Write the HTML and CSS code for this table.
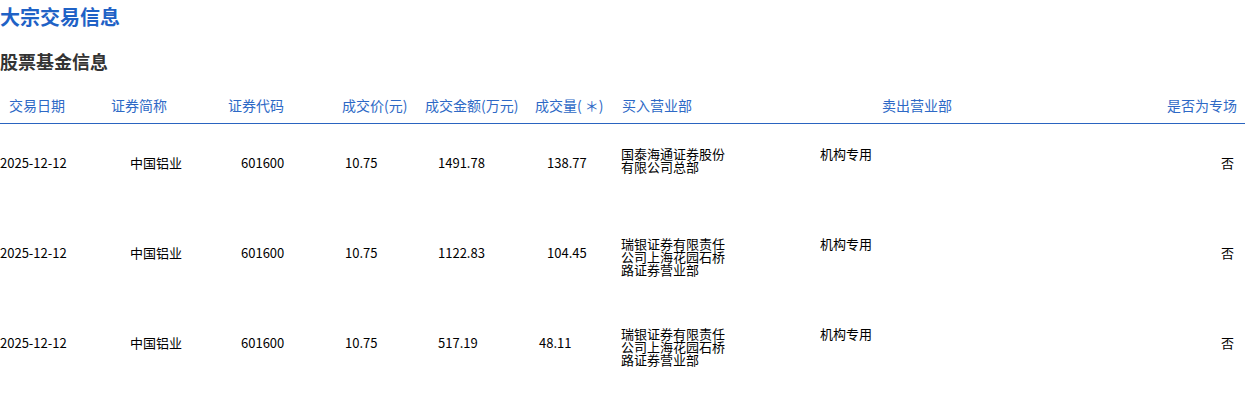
FILE: index.html
```html
<!DOCTYPE html>
<html lang="zh-CN">
<head>
<meta charset="utf-8">
<title>大宗交易信息</title>
<link rel="stylesheet" href="styles.css">
</head>
<body>
<h1 class="title">大宗交易信息</h1>
<h2 class="subtitle">股票基金信息</h2>
<div class="table">
  <div class="row head">
    <div class="c c1">交易日期</div>
    <div class="c c2">证券简称</div>
    <div class="c c3">证券代码</div>
    <div class="c c4">成交价(元)</div>
    <div class="c c5">成交金额(万元)</div>
    <div class="c c6">成交量( ＊)</div>
    <div class="c c7">买入营业部</div>
    <div class="c c8">卖出营业部</div>
    <div class="c c9">是否为专场</div>
  </div>
  <div class="row data">
    <div class="c c1">2025-12-12</div>
    <div class="c c2">中国铝业</div>
    <div class="c c3">601600</div>
    <div class="c c4">10.75</div>
    <div class="c c5">1491.78</div>
    <div class="c c6">138.77</div>
    <div class="c c7 dept">国泰海通证券股份有限公司总部</div>
    <div class="c c8 dept">机构专用</div>
    <div class="c c9">否</div>
  </div>
  <div class="row data">
    <div class="c c1">2025-12-12</div>
    <div class="c c2">中国铝业</div>
    <div class="c c3">601600</div>
    <div class="c c4">10.75</div>
    <div class="c c5">1122.83</div>
    <div class="c c6">104.45</div>
    <div class="c c7 dept">瑞银证券有限责任公司上海花园石桥路证券营业部</div>
    <div class="c c8 dept">机构专用</div>
    <div class="c c9">否</div>
  </div>
  <div class="row data">
    <div class="c c1">2025-12-12</div>
    <div class="c c2">中国铝业</div>
    <div class="c c3">601600</div>
    <div class="c c4">10.75</div>
    <div class="c c5">517.19</div>
    <div class="c c6 short">48.11</div>
    <div class="c c7 dept">瑞银证券有限责任公司上海花园石桥路证券营业部</div>
    <div class="c c8 dept">机构专用</div>
    <div class="c c9">否</div>
  </div>
</div>
</body>
</html>
```
FILE: styles.css
```css
* { box-sizing: border-box; }
html, body { margin: 0; padding: 0; background: #fff; }
body {
  font-family: "Noto Sans CJK SC", "Noto Sans", sans-serif;
  color: #000;
  width: 1245px;
  overflow: hidden;
}
.title {
  margin: 0;
  font-size: 20px;
  font-weight: 700;
  line-height: 34px;
  color: #1f62c6;
}
.subtitle {
  margin: 14px 0 0;
  font-size: 18px;
  font-weight: 700;
  line-height: 26px;
  color: #333;
}
.table { margin-top: 15px; }
.row {
  display: grid;
  grid-template-columns: 100px 110px 110px 100px 110px 85px 185px 200px 245px;
}
.head {
  height: 35px;
  border-bottom: 1px solid #2a64c0;
  font-size: 14px;
  line-height: 33px;
  color: #2e69c6;
}
.data {
  height: 90px;
  font-size: 13px;
  line-height: 34px;
  padding-top: 22px;
}
.c { white-space: nowrap; }
.dept { white-space: normal; line-height: 13px; padding-top: 1px; }

/* header offsets */
.head .c1 { padding-left: 9px; }
.head .c2 { padding-left: 11px; }
.head .c3 { padding-left: 18px; }
.head .c4 { padding-left: 22px; }
.head .c5 { padding-left: 5px; }
.head .c6 { padding-left: 5px; }
.head .c7 { padding-left: 7px; }
.head .c8 { padding-left: 82px; }
.head .c9 { text-align: right; padding-right: 8px; }

/* data offsets */
.data .c2 { padding-left: 30px; }
.data .c3 { padding-left: 31px; }
.data .c4 { padding-left: 25px; }
.data .c5 { padding-left: 18px; }
.data .c6 { padding-left: 17px; }
.data .c6.short { padding-left: 9px; }
.data .c7 { padding-left: 6px; width: 110px; }
.data .c8 { padding-left: 20px; }
.data .c9 { text-align: right; padding-right: 11px; }
```
